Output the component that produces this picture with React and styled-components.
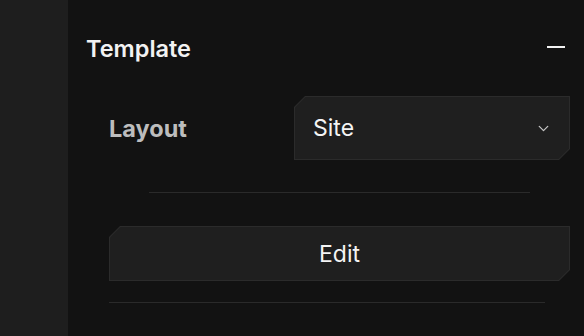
import styled, { createGlobalStyle } from 'styled-components';
import { ChevronDown } from 'lucide-react';

const GlobalStyle = createGlobalStyle`
  html, body {
    margin: 0;
    padding: 0;
    background: #121212;
  }
  * {
    box-sizing: border-box;
  }
`;

const App = () => {
  return (
    <>
      <GlobalStyle />
      <Container>
        <Sidebar />
        <Panel>
          <Header>
            <Title>Template</Title>
            <Collapse type='button' aria-label='collapse' />
          </Header>
          <Body>
            <Row>
              <Label>Layout</Label>
              <Chamfer>
                <SelectBox>
                  <span>Site</span>
                  <ChevronDown size={17} strokeWidth={1.8} color='#c4c4c4' />
                </SelectBox>
              </Chamfer>
            </Row>
            <Divider $top='32px' $left='40px' $right='40px' />
            <ButtonWrap>
              <Chamfer>
                <EditBtn type='button'>Edit</EditBtn>
              </Chamfer>
            </ButtonWrap>
            <Divider $top='21px' $left='0' $right='25px' />
          </Body>
        </Panel>
      </Container>
    </>
  );
};

export default App;

const Container = styled.div`
  display: flex;
  width: 100%;
  height: 336px;
  background: #121212;
  font-family: Inter, 'Noto Sans', sans-serif;
`;

const Sidebar = styled.div`
  width: 68px;
  flex-shrink: 0;
  background: #1e1e1e;
`;

const Panel = styled.div`
  flex: 1;
  padding: 28px 14px 0 18px;
  display: flex;
  flex-direction: column;
`;

const Header = styled.div`
  height: 38px;
  display: flex;
  align-items: center;
  justify-content: space-between;
`;

const Title = styled.h2`
  margin: 0;
  padding-top: 2px;
  color: #f2f2f2;
  font-size: 23.5px;
  font-weight: 600;
`;

const Collapse = styled.button`
  width: 18px;
  height: 2.5px;
  margin-right: 5px;
  padding: 0;
  border: none;
  background: #f2f2f2;
`;

const Body = styled.div`
  padding-left: 23px;
  margin-top: 30px;
  display: flex;
  flex-direction: column;
`;

const Row = styled.div`
  display: grid;
  grid-template-columns: 185px 1fr;
  align-items: center;
  height: 64px;
`;

const Label = styled.span`
  color: #bdbdbd;
  font-size: 23.5px;
  font-weight: 700;
`;

const cut = 11;

const corners = (c) => `
  clip-path: polygon(
    ${c}px 0,
    100% 0,
    100% calc(100% - ${c}px),
    calc(100% - ${c}px) 100%,
    0 100%,
    0 ${c}px
  );
`;

const Chamfer = styled.div`
  height: 100%;
  padding: 1px;
  background: #2b2b2b;
  ${corners(cut)}
`;

const SelectBox = styled.div`
  height: 100%;
  display: flex;
  align-items: center;
  justify-content: space-between;
  padding: 0 17px 0 18px;
  background: #1f1f1f;
  color: #f4f4f4;
  font-size: 23px;
  font-weight: 400;
  ${corners(cut - 0.5)}
`;

const Divider = styled.div`
  height: 1px;
  margin-top: ${(p) => p.$top};
  margin-left: ${(p) => p.$left};
  margin-right: ${(p) => p.$right};
  background: #2a2a2a;
`;

const ButtonWrap = styled.div`
  height: 55px;
  margin-top: 33px;
`;

const EditBtn = styled.button`
  width: 100%;
  height: 100%;
  border: none;
  background: #1f1f1f;
  color: #f4f4f4;
  font-family: Inter, 'Noto Sans', sans-serif;
  font-size: 23px;
  font-weight: 400;
  ${corners(cut - 0.5)}
`;
